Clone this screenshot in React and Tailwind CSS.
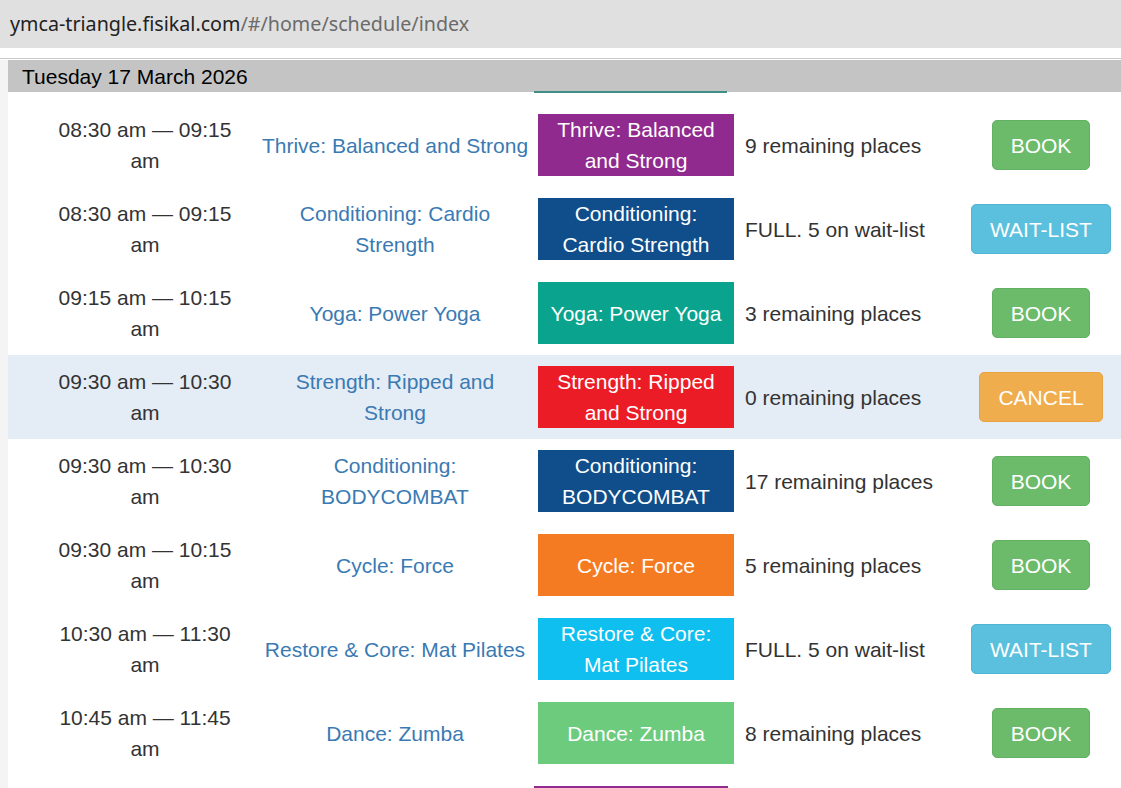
import React from 'react';

const rows = [
  {
    time: ['08:30 am — 09:15', 'am'],
    name: ['Thrive: Balanced and Strong'],
    badge: ['Thrive: Balanced', 'and Strong'],
    color: 'bg-[#902a8e]',
    status: '9 remaining places',
    action: 'book',
  },
  {
    time: ['08:30 am — 09:15', 'am'],
    name: ['Conditioning: Cardio', 'Strength'],
    badge: ['Conditioning:', 'Cardio Strength'],
    color: 'bg-[#0f4e8a]',
    status: 'FULL. 5 on wait-list',
    action: 'wait',
  },
  {
    time: ['09:15 am — 10:15', 'am'],
    name: ['Yoga: Power Yoga'],
    badge: ['Yoga: Power Yoga'],
    color: 'bg-[#0aa48e]',
    status: '3 remaining places',
    action: 'book',
  },
  {
    time: ['09:30 am — 10:30', 'am'],
    name: ['Strength: Ripped and', 'Strong'],
    badge: ['Strength: Ripped', 'and Strong'],
    color: 'bg-[#ec1c26]',
    status: '0 remaining places',
    action: 'cancel',
    booked: true,
  },
  {
    time: ['09:30 am — 10:30', 'am'],
    name: ['Conditioning:', 'BODYCOMBAT'],
    badge: ['Conditioning:', 'BODYCOMBAT'],
    color: 'bg-[#0f4e8a]',
    status: '17 remaining places',
    action: 'book',
  },
  {
    time: ['09:30 am — 10:15', 'am'],
    name: ['Cycle: Force'],
    badge: ['Cycle: Force'],
    color: 'bg-[#f47b22]',
    status: '5 remaining places',
    action: 'book',
  },
  {
    time: ['10:30 am — 11:30', 'am'],
    name: ['Restore & Core: Mat Pilates'],
    badge: ['Restore & Core:', 'Mat Pilates'],
    color: 'bg-[#0ebff0]',
    status: 'FULL. 5 on wait-list',
    action: 'wait',
  },
  {
    time: ['10:45 am — 11:45', 'am'],
    name: ['Dance: Zumba'],
    badge: ['Dance: Zumba'],
    color: 'bg-[#6dcb7e]',
    status: '8 remaining places',
    action: 'book',
  },
];

const buttons = {
  book: { label: 'BOOK', cls: 'bg-[#6bbb6b] border-[#62b062]' },
  wait: { label: 'WAIT-LIST', cls: 'bg-[#5bc0de] border-[#50b5d3]' },
  cancel: { label: 'CANCEL', cls: 'bg-[#f0ad4e] border-[#e8a443]' },
};

const Lines = ({ lines }) => lines.map((l, i) => <div key={i}>{l}</div>);

const Row = ({ row }) => {
  const btn = buttons[row.action];
  return (
    <div className={`h-[84px] flex items-center ${row.booked ? 'bg-[#e4ecf5]' : ''}`}>
      <div className="w-[180px] ml-[47px] text-center text-[#333] whitespace-nowrap">
        <Lines lines={row.time} />
      </div>
      <div className="w-[272px] ml-[24px] text-center text-[#3a7ab3] whitespace-nowrap">
        <Lines lines={row.name} />
      </div>
      <div className="w-[204px] ml-[3px] flex justify-center">
        <div className={`w-[196px] h-[62px] flex flex-col justify-center items-center text-white whitespace-nowrap ${row.color}`}>
          <Lines lines={row.badge} />
        </div>
      </div>
      <div className="w-[222px] ml-[7px] text-[#333] whitespace-nowrap">{row.status}</div>
      <div className="flex-1 flex justify-center pr-[6px]">
        <button className={`h-[50px] px-[18px] rounded-[5px] border text-white ${btn.cls}`}>
          {btn.label}
        </button>
      </div>
    </div>
  );
};

export default function App() {
  return (
    <div className="w-[1121px] h-[788px] overflow-hidden bg-white font-['Liberation_Sans',Arial,sans-serif]">
      <div className="h-[48px] bg-[#e0e0e0] flex items-center pl-[10px] text-[19.7px] font-['Noto_Sans',sans-serif]">
        <span className="text-[#222]">ymca-triangle.fisikal.com</span>
        <span className="text-[#6b6b6b]">/#/home/schedule/index</span>
      </div>
      <div className="h-[10px] bg-white" />
      <div className="h-[1px] bg-[#c9c9c9]" />
      <div className="h-[1px] bg-white" />
      <div className="flex">
        <div className="w-[8px] bg-[#f4f4f4]" />
        <div className="flex-1 text-[21px] leading-[31px]">
          <div className="h-[32px] bg-[#c4c4c4] flex items-center pl-[14px] text-[21px] text-black">
            Tuesday 17 March 2026
          </div>
          <div className="h-[11px] relative">
            <div className="absolute left-[526px] top-[-1px] w-[193px] h-[2px] bg-[#3f8f86]" />
          </div>
          {rows.map((row, i) => (
            <Row key={i} row={row} />
          ))}
          <div className="h-[84px] flex items-center">
            <div className="ml-[526px] w-[194px] h-[62px] bg-[#902a8e]" />
          </div>
        </div>
      </div>
    </div>
  );
}
